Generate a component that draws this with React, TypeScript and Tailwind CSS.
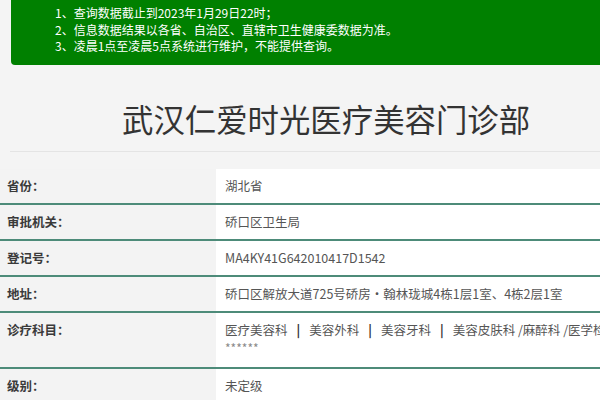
import React from "react"

const notices = [
    "1、查询数据截止到2023年1月29日22时；",
    "2、信息数据结果以各省、自治区、直辖市卫生健康委数据为准。",
    "3、凌晨1点至凌晨5点系统进行维护，不能提供查询。",
]

interface InfoRow {
    label: string;
    value: string | string[];
    extra?: string;
}

const rows: InfoRow[] = [
    { label: "省份：", value: "湖北省" },
    { label: "审批机关：", value: "硚口区卫生局" },
    { label: "登记号：", value: "MA4KY41G642010417D1542" },
    { label: "地址：", value: "硚口区解放大道725号硚房·翰林珑城4栋1层1室、4栋2层1室" },
    { label: "诊疗科目：", value: ["医疗美容科", "美容外科", "美容牙科", "美容皮肤科 /麻醉科 /医学检验科"], extra: "******" },
    { label: "级别：", value: "未定级" },
]

const App = () => {
    return (
        <div className="w-[600px] h-[400px] overflow-hidden bg-[#f4f4f4] text-[#333]" style={{ fontFamily: '"Noto Sans CJK SC", "Noto Sans", sans-serif' }}>
            <div className="ml-[11px] bg-[#008000] rounded-bl-[4px] pl-[44px] pt-[5px] pb-[10px] text-white text-[12px] leading-[16.5px]">
                {notices.map((n, i) => (
                    <p key={i} className="whitespace-nowrap">{n}</p>
                ))}
            </div>

            <div className="ml-[10px] h-[87px] border-b border-[#e4e4e4] flex items-center">
                <h1 className="pl-[112px] pt-[22px] text-[31.4px] leading-none text-[#333] whitespace-nowrap font-normal">武汉仁爱时光医疗美容门诊部</h1>
            </div>

            <div className="mt-[17px]">
                {rows.map((row, i) => (
                    <div key={i} className="flex border-b-2 border-[#4d8b79]">
                        <div className="w-[216px] shrink-0 pl-[7px] py-[9px] text-[12.5px] leading-[16px] font-semibold text-[#3a3a3a] bg-[#f3f3f3]">
                            {row.label}
                        </div>
                        <div className={`flex-1 min-w-0 bg-white pl-[9px] py-[9px] text-[12.5px] leading-[16px] text-[#555] overflow-hidden ${row.extra ? "pb-[11px]" : ""}`}>
                            {Array.isArray(row.value) ? (
                                <div className="flex items-center gap-[9px] whitespace-nowrap">
                                    {row.value.map((v, j) => (
                                        <React.Fragment key={j}>
                                            {j > 0 && <span className="text-[#333] font-semibold">|</span>}
                                            <span>{v}</span>
                                        </React.Fragment>
                                    ))}
                                </div>
                            ) : (
                                <p className="whitespace-nowrap">{row.value}</p>
                            )}
                            {row.extra && (
                                <p className="text-[12px] leading-[16px] text-[#8a8a8a] pt-[2px]">{row.extra}</p>
                            )}
                        </div>
                    </div>
                ))}
            </div>
        </div>
    )
}

export default App
